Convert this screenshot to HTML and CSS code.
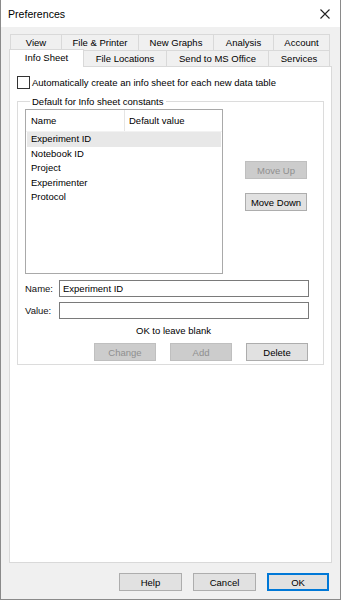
FILE: index.html
```html
<!DOCTYPE html>
<html>
	<head>
		<meta charset="utf-8">
		<title>Preferences</title>
		<link rel="stylesheet" href="styles.css">
	</head>
	<body>
		<div class="window">
			<div class="titlebar">
				<span class="title">Preferences</span>
				<svg class="close" width="10" height="10" viewBox="0 0 10 10">
					<path d="M0.5 0.5L9.5 9.5M9.5 0.5L0.5 9.5" stroke="#222" stroke-width="1.1" fill="none"/>
				</svg>
			</div>
			<div class="body">
				<!-- 选项卡 -->
				<div class="tabs">
					<div class="tabrow back">
						<div class="tab t-view">View</div>
						<div class="tab t-print">File &amp; Printer</div>
						<div class="tab t-graph">New Graphs</div>
						<div class="tab t-anal">Analysis</div>
						<div class="tab t-acc">Account</div>
					</div>
					<div class="tabrow front">
						<div class="tab t-info active">Info Sheet</div>
						<div class="tab t-loc">File Locations</div>
						<div class="tab t-ms">Send to MS Office</div>
						<div class="tab t-serv">Services</div>
					</div>
				</div>
				<div class="panel">
					<label class="check">
						<span class="box"></span>
						<span>Automatically create an info sheet for each new data table</span>
					</label>
					<fieldset class="group">
						<legend>Default for Info sheet constants</legend>
						<div class="listarea">
							<div class="listview">
								<div class="lv-head">
									<div class="col1">Name</div>
									<div class="col2">Default value</div>
								</div>
								<ul class="lv-rows">
									<li class="sel">Experiment ID</li>
									<li>Notebook ID</li>
									<li>Project</li>
									<li>Experimenter</li>
									<li>Protocol</li>
								</ul>
							</div>
							<div class="side">
								<button class="btn" disabled>Move Up</button>
								<button class="btn">Move Down</button>
							</div>
						</div>
						<div class="field">
							<label for="name">Name:</label>
							<input type="text" id="name" value="Experiment ID">
						</div>
						<div class="field">
							<label for="value">Value:</label>
							<input type="text" id="value">
						</div>
						<p class="hint">OK to leave blank</p>
						<div class="actions">
							<button class="btn" disabled>Change</button>
							<button class="btn" disabled>Add</button>
							<button class="btn">Delete</button>
						</div>
					</fieldset>
				</div>
				<div class="footer">
					<button class="btn">Help</button>
					<button class="btn">Cancel</button>
					<button class="btn ok">OK</button>
				</div>
			</div>
		</div>
	</body>
</html>
```

FILE: styles.css
```css
*{
	margin: 0;
	padding: 0;
	box-sizing: border-box;
}
body{
	font-family: "Liberation Sans", Arial, sans-serif;
	font-size: 9.5px;
	color: #000;
	background: #f0f0f0;
}
.window{
	width: 341px;
	height: 600px;
	background: #f0f0f0;
	border: 1px solid #8a8a8a;
	border-top: none;
}
.titlebar{
	height: 27px;
	background: #fff;
	display: flex;
	align-items: center;
	justify-content: space-between;
	padding: 0 10px 0 7px;
}
.title{
	font-size: 10.6px;
}
.body{
	padding: 7px 0 0 8px;
}
/* 选项卡 */
.tabs{
	position: relative;
	z-index: 1;
}
.tabrow{
	display: flex;
}
.back{
	padding-left: 1px;
	height: 16px;
}
.front{
	height: 16px;
	align-items: flex-end;
}
.tab{
	border: 1px solid #d9d9d9;
	border-bottom: none;
	margin-right: -1px;
	background: #f0f0f0;
	text-align: center;
	color: #000;
}
.back .tab{
	height: 17px;
	line-height: 16px;
}
.front .tab{
	height: 16px;
	line-height: 15px;
}
.front .tab.active{
	height: 18px;
	margin-bottom: -1px;
	background: #fff;
	line-height: 16px;
	padding-bottom: 2px;
}
.t-view{ width: 52px; }
.t-print{ width: 78px; }
.t-graph{ width: 76px; }
.t-anal{ width: 61px; }
.t-acc{ width: 57px; }
.t-info{ width: 75px; }
.t-loc{ width: 84px; }
.t-ms{ width: 103px; }
.t-serv{ width: 62px; }

.panel{
	width: 323px;
	height: 497px;
	background: #fff;
	border: 1px solid #d9d9d9;
	padding: 9px 7px 0 7px;
}
.check{
	display: flex;
	align-items: center;
	gap: 2px;
	height: 13px;
}
.check .box{
	width: 13px;
	height: 13px;
	border: 1px solid #333;
	background: #fff;
}
.group{
	margin-top: 7px;
	width: 307px;
	height: 269px;
	border: 1px solid #dcdcdc;
	padding: 0 7px 0 7px;
}
.group legend{
	margin-left: 5px;
	padding: 0 2px;
	line-height: 11px;
}
.listarea{
	display: flex;
	margin-top: 2px;
}
.listview{
	width: 198px;
	height: 165px;
	border: 1px solid #a9a9a9;
	background: #fff;
}
.lv-head{
	display: flex;
	height: 22px;
	line-height: 21px;
	border-bottom: 1px solid #f2f2f2;
}
.col1{
	width: 99px;
	padding-left: 5px;
	border-right: 1px solid #e5e5e5;
}
.col2{
	padding-left: 4px;
}
.lv-rows{
	list-style: none;
	padding: 0 1px;
}
.lv-rows li{
	height: 14.5px;
	line-height: 14.5px;
	padding-left: 4px;
}
.lv-rows li.sel{
	background: #e8e8e8;
}
.side{
	display: flex;
	flex-direction: column;
	gap: 14px;
	padding: 52px 0 0 22px;
}
.btn{
	width: 62px;
	height: 18px;
	font-family: inherit;
	font-size: 9.5px;
	color: #000;
	background: #e1e1e1;
	border: 1px solid #adadad;
}
.btn:disabled{
	background: #cccccc;
	border-color: #bfbfbf;
	color: #8f8f8f;
}
.field{
	display: flex;
	align-items: center;
	margin-top: 6px;
}
.field + .field{
	margin-top: 5px;
}
.field label{
	width: 34px;
	color: #111;
}
.field input{
	width: 250px;
	height: 17px;
	border: 1px solid #7a7a7a;
	font-family: inherit;
	font-size: 9.5px;
	padding: 0 3px;
	outline: none;
}
.hint{
	text-align: center;
	margin-top: 5px;
	padding-left: 6px;
	line-height: 14px;
}
.actions{
	display: flex;
	justify-content: flex-end;
	gap: 14px;
	margin-top: 5px;
	padding-right: 8px;
}
.footer{
	display: flex;
	justify-content: flex-end;
	gap: 11px;
	padding: 10px 11px 0 0;
}
.footer .btn{
	width: 63px;
}
.btn.ok{
	border: 2px solid #0078d7;
	width: 62px;
}
```
